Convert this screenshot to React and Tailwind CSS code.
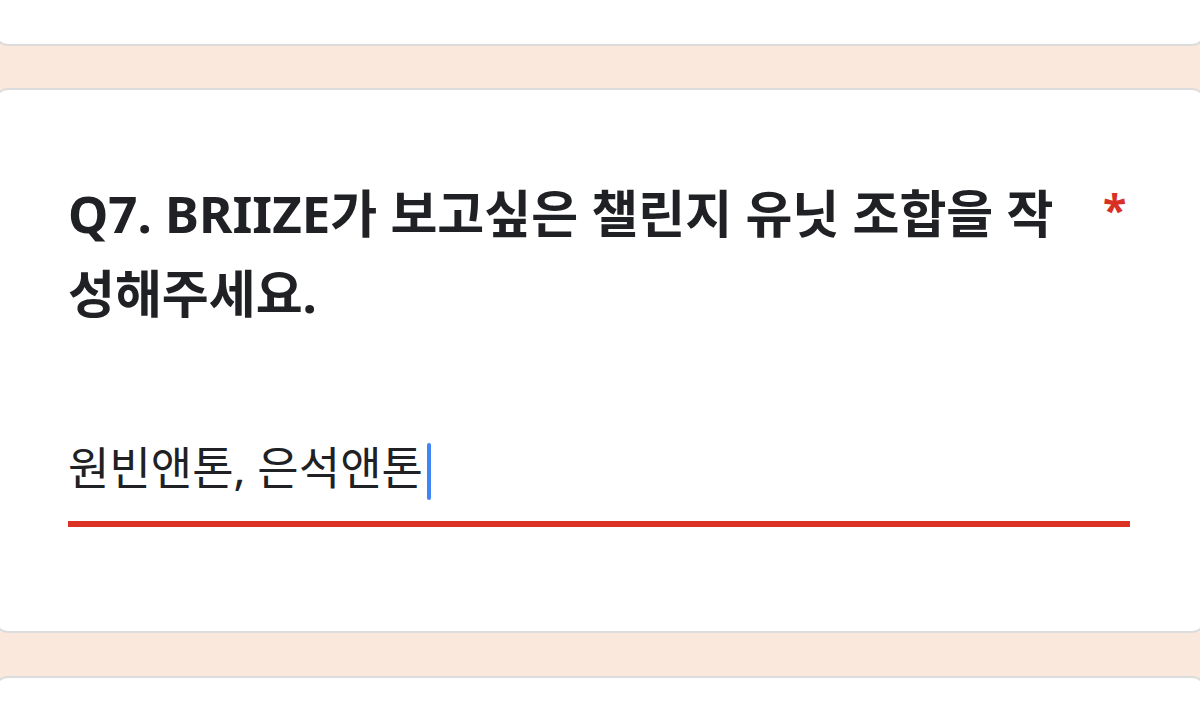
export default function App() {
  const font = { fontFamily: '"Noto Sans", "Noto Sans CJK KR", sans-serif' };
  return (
    <div className="w-[1200px] h-[728px] overflow-hidden bg-[#fbe8dc]" style={font}>
      <div className="flex flex-col mx-[-6px]">
        {/* previous card, only its bottom edge shows */}
        <div className="h-[46px] bg-white border-2 border-t-0 border-[#dcdcdc] rounded-b-[14px]" />

        <div className="mt-[42px] h-[545px] bg-white border-2 border-[#dcdcdc] rounded-[14px] pl-[72px] pr-[74px] pt-[83px]">
          <div className="flex items-start">
            <h2 className="flex-1 whitespace-nowrap text-[51px] leading-[80px] font-bold text-[#202124]">
              Q7. BRIIZE가 보고싶은 챌린지 유닛 조합을 작<br />성해주세요.
            </h2>
            <span className="w-[50px] pl-[23px] text-[43px] leading-[74px] font-bold text-[#d93025]">*</span>
          </div>

          <div className="mt-[107px] flex items-start h-[56px]">
            <span className="text-[45px] leading-[56px] text-[#202124]">원빈앤톤, 은석앤톤</span>
            <span className="ml-[4px] mt-[3px] w-[4px] h-[57px] rounded-full bg-[#4285f4]" />
          </div>
          <div className="mt-[25px] h-[6px] bg-[#dc3226]" />
        </div>

        <div className="mt-[43px] h-[80px] bg-white border-2 border-b-0 border-[#dcdcdc] rounded-t-[14px]" />
      </div>
    </div>
  );
}
